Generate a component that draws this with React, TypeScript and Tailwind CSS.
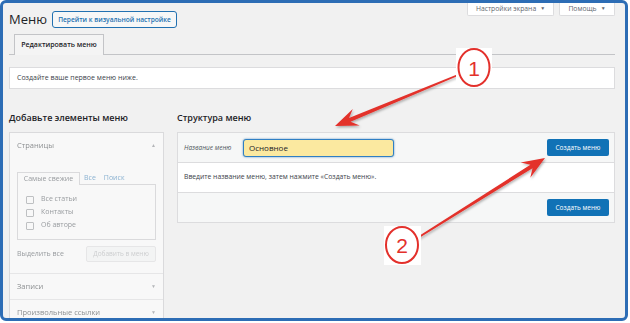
import React from "react";

const RED = "#e3302b";

function arrowPoints(sx: number, sy: number, tx: number, ty: number) {
  const dx = tx - sx;
  const dy = ty - sy;
  const len = Math.hypot(dx, dy);
  const ux = dx / len;
  const uy = dy / len;
  const nx = -uy;
  const ny = ux;
  const p = (d: number, w: number) => [tx - ux * d + nx * w, ty - uy * d + ny * w];
  const pts = [
    [sx + nx * 0.9, sy + ny * 0.9],
    p(16, 2),
    p(23, 9),
    [tx, ty],
    p(23, -9),
    p(16, -2),
    [sx - nx * 0.9, sy - ny * 0.9],
  ];
  return pts.map((q) => q.map((v) => v.toFixed(1)).join(",")).join(" ");
}

function MetaTab({ label, width }: { label: string; width: string }) {
  return (
    <div
      className={`${width} flex h-[13px] items-center justify-center gap-[4px] rounded-b-[2px] border-x border-b border-[#dcdcde] bg-white text-[6.8px] text-[#646970]`}
    >
      <span>{label}</span>
      <span className="text-[5px]">▼</span>
    </div>
  );
}

function Checkbox({ label }: { label: string }) {
  return (
    <div className="flex h-[13px] items-center gap-[7px] pl-[8px]">
      <span className="h-[8px] w-[8px] rounded-[1px] border border-[#8c8f94] bg-white" />
      <span className="text-[7px] text-[#3c434a]">{label}</span>
    </div>
  );
}

function SectionTitle({ label, up }: { label: string; up?: boolean }) {
  return (
    <div className="flex h-[25px] items-center justify-between px-[7px] text-[7.5px] text-[#1d2327]">
      <span>{label}</span>
      <span className="text-[5px] text-[#787c82]">{up ? "▲" : "▼"}</span>
    </div>
  );
}

function BlueButton() {
  return (
    <span className="flex h-[17px] w-[62px] items-center justify-center rounded-[2px] bg-[#1172b6] text-[6.5px] text-white">
      Создать меню
    </span>
  );
}

export default function App() {
  return (
    <div className="h-[323px] w-[630px] bg-white font-['Open_Sans',sans-serif] text-[#1d2327]">
      <div className="relative h-[321px] w-[628px] overflow-hidden rounded-[6px] border-[3px] border-[#2d6db5] bg-[#f1f1f1] pl-[6px] pr-[10px]">
        {/* header */}
        <div className="flex items-start justify-between">
          <div className="mt-[8px] flex items-center gap-[5px]">
            <h1 className="text-[13px] leading-[17px] text-[#1d2327]">Меню</h1>
            <span className="flex h-[17px] w-[125px] items-center justify-center rounded-[3px] border border-[#2271b1] bg-[#f6f7f7] text-[6.6px] font-semibold text-[#2271b1]">
              Перейти к визуальной настройке
            </span>
          </div>
          <div className="flex gap-[5px]">
            <MetaTab label="Настройки экрана" width="w-[87px]" />
            <MetaTab label="Помощь" width="w-[56px]" />
          </div>
        </div>

        {/* tabs */}
        <div className="mt-[6px] flex border-b border-[#c3c4c7] pl-[5px]">
          <div className="-mb-px flex h-[21px] w-[90px] items-center justify-center border-x border-t border-[#c3c4c7] bg-[#f4f4f4] text-[7px] font-semibold">
            Редактировать меню
          </div>
        </div>

        {/* notice */}
        <div className="mt-[12px] flex h-[22px] items-center border border-[#dcdcde] bg-white pl-[7px] text-[7px] text-[#3c434a]">
          Создайте ваше первое меню ниже.
        </div>

        {/* columns */}
        <div className="mt-[21px] flex gap-[13px]">
          <div className="w-[155px]">
            <h2 className="h-[16px] text-[9px] font-semibold leading-[16px]">Добавьте элементы меню</h2>
            <div className="mt-[6px] border border-[#c3c4c7] bg-white opacity-50">
              <div className="border-b border-[#dcdcde]">
                <SectionTitle label="Страницы" up />
                <div className="px-[7px] pb-[11px] pt-[14px]">
                  <div className="flex h-[12px] items-end text-[7px]">
                    <span className="-mb-px flex h-[13px] w-[63px] items-center justify-center border-x border-t border-[#c3c4c7] bg-white text-[#3c434a]">
                      Самые свежие
                    </span>
                    <span className="flex h-[12px] items-center px-[4px] text-[#2271b1]">Все</span>
                    <span className="flex h-[12px] items-center px-[4px] text-[#2271b1]">Поиск</span>
                  </div>
                  <div className="h-[56px] border border-[#c3c4c7] bg-white pt-[8px]">
                    <Checkbox label="Все статьи" />
                    <Checkbox label="Контакты" />
                    <Checkbox label="Об авторе" />
                  </div>
                  <div className="mt-[6px] flex items-center justify-between">
                    <span className="text-[7px] text-[#3c434a]">Выделить все</span>
                    <span className="flex h-[16px] w-[70px] items-center justify-center rounded-[2px] border border-[#dcdcde] bg-[#f6f7f7] text-[6.5px] text-[#a7aaad]">
                      Добавить в меню
                    </span>
                  </div>
                </div>
              </div>
              <div className="border-b border-[#dcdcde]">
                <SectionTitle label="Записи" />
              </div>
              <div className="border-b border-[#dcdcde]">
                <SectionTitle label="Произвольные ссылки" />
              </div>
            </div>
          </div>

          <div className="flex-1">
            <h2 className="h-[16px] text-[9px] font-semibold leading-[16px]">Структура меню</h2>
            <div className="mt-[6px] border border-[#dcdcde] bg-white">
              <div className="flex h-[30px] items-center justify-between border-b border-[#dcdcde] bg-[#f6f7f7] pl-[6px] pr-[5px]">
                <div className="flex items-center">
                  <span className="w-[59px] text-[6.5px] italic text-[#50575e]">Название меню</span>
                  <span className="flex h-[18px] w-[151px] items-center rounded-[3px] border border-[#2f7fc4] bg-[#fbe9a0] pl-[5px] text-[8px] text-[#1d2327] shadow-[0_0_2px_rgba(34,113,177,0.8)]">
                    Основное
                  </span>
                </div>
                <BlueButton />
              </div>
              <div className="flex h-[30px] items-center border-b border-[#dcdcde] pl-[6px] text-[6.8px] text-[#3c434a]">
                Введите название меню, затем нажмите «Создать меню».
              </div>
              <div className="flex h-[29px] items-center justify-end bg-[#f6f7f7] pr-[5px]">
                <BlueButton />
              </div>
            </div>
          </div>
        </div>

        {/* annotations */}
        <svg
          className="pointer-events-none absolute left-[-3px] top-[-3px] h-[323px] w-[630px]"
          viewBox="0 0 630 323"
        >
          <defs>
            <filter id="sh" x="-10%" y="-10%" width="120%" height="130%">
              <feDropShadow dx="1" dy="1.5" stdDeviation="0.8" floodColor="#000" floodOpacity="0.3" />
            </filter>
          </defs>
          <polygon points={arrowPoints(458, 75, 335, 126)} fill={RED} filter="url(#sh)" />
          <polygon points={arrowPoints(419, 237, 545, 158)} fill={RED} filter="url(#sh)" />

          <rect x="456" y="48" width="36" height="40" fill="white" />
          <ellipse cx="474" cy="67.5" rx="15.5" ry="18.5" fill="white" stroke={RED} strokeWidth="2" />
          <text x="474" y="75.5" textAnchor="middle" fontSize="21" fill={RED} fontFamily="'Liberation Sans', sans-serif">
            1
          </text>

          <rect x="384" y="226" width="37" height="39" fill="white" />
          <ellipse cx="402" cy="245" rx="16" ry="18" fill="white" stroke={RED} strokeWidth="2" />
          <text x="402" y="253" textAnchor="middle" fontSize="21" fill={RED} fontFamily="'Liberation Sans', sans-serif">
            2
          </text>
        </svg>
      </div>
    </div>
  );
}
